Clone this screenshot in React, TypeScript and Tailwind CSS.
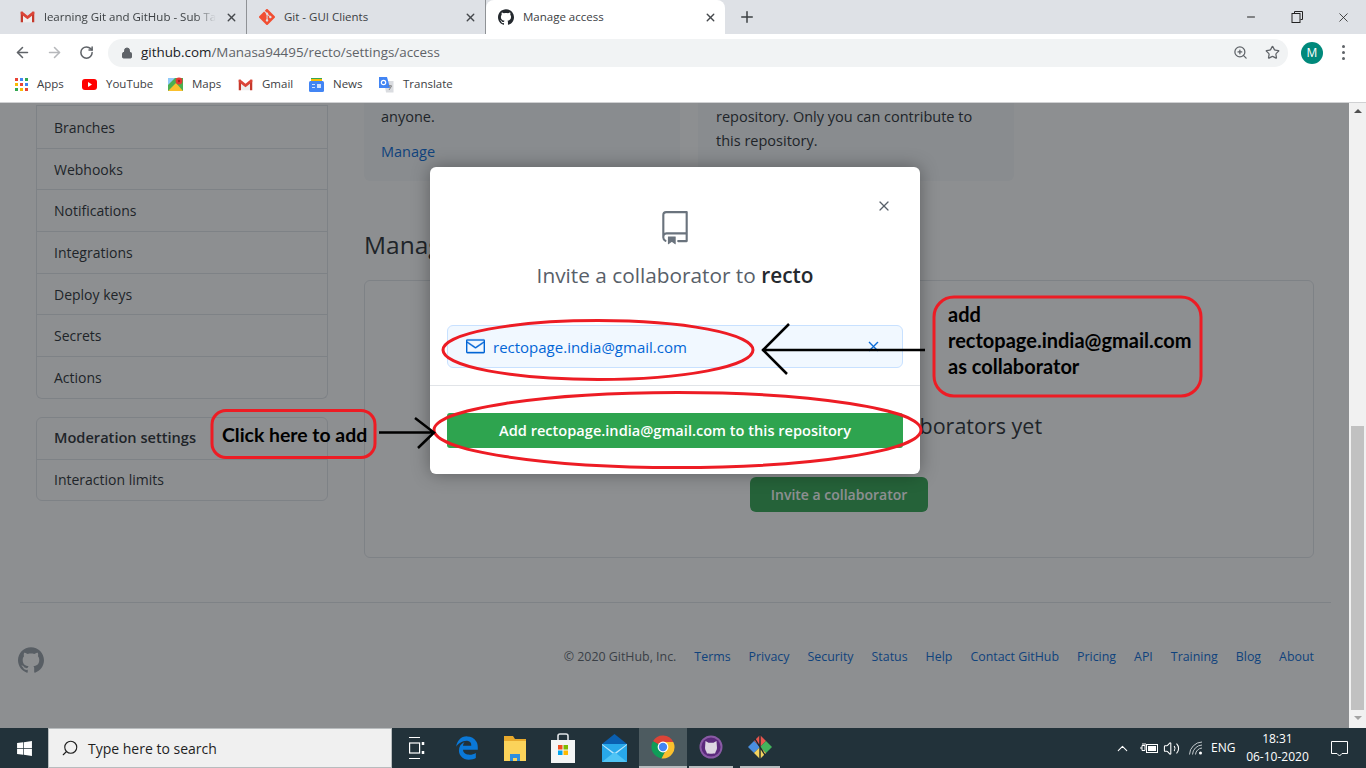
import type { ReactNode } from "react";
import { ArrowLeft, ArrowRight, RotateCw, Lock, ZoomIn, Star, X, Plus, Minus, Search, ChevronUp, Volume2 } from "lucide-react";
import { GoRepo, GoMail, GoX } from "react-icons/go";
import { SiGit, SiGithub } from "react-icons/si";
import { FaWindows, FaEdgeLegacy } from "react-icons/fa";

const sideLinks = ["Branches", "Webhooks", "Notifications", "Integrations", "Deploy keys", "Secrets", "Actions"];
const footerLinks = ["Terms", "Privacy", "Security", "Status", "Help", "Contact GitHub", "Pricing", "API", "Training", "Blog", "About"];

function GmailIcon({ size = 15 }: { size?: number }) {
  return (
    <svg width={size} height={size * 0.8} viewBox="0 0 20 16" className="shrink-0">
      <path d="M4 6.500h12V15H4z" fill="#eeeeee" />
      <path d="M1 1h3v14H1z M16 1h3v14h-3z" fill="#c5382b" />
      <path d="M1 1h2.400L10 6.400 16.600 1H19v3l-9 7-9-7z" fill="#db4437" />
    </svg>
  );
}

function YouTubeIcon() {
  return (
    <svg width="15" height="11" viewBox="0 0 15 11" className="shrink-0">
      <rect width="15" height="11" rx="3" fill="#f00" />
      <path d="M6 3l4 2.500L6 8z" fill="#fff" />
    </svg>
  );
}

function AppsIcon() {
  const colors = ["#ea4335", "#4285f4", "#34a853", "#fbbc04", "#ea4335", "#4285f4", "#34a853", "#fbbc04", "#ea4335"];
  return (
    <div className="grid grid-cols-3 gap-[2px] w-[13px] shrink-0">
      {colors.map((c, i) => (
        <span key={i} className="w-[3px] h-[3px]" style={{ background: c }} />
      ))}
    </div>
  );
}

function MapsIcon() {
  return (
    <svg width="15" height="15" viewBox="0 0 15 15" className="shrink-0">
      <path d="M0 1h15v13H0z" fill="#4caf50" />
      <path d="M0 14L8 6l7 8z" fill="#fbc02d" />
      <path d="M0 1h7L0 8z" fill="#90caf9" />
      <circle cx="11" cy="4" r="3.400" fill="#e53935" />
      <circle cx="11" cy="4" r="1.200" fill="#a32020" />
    </svg>
  );
}

function NewsIcon() {
  return (
    <svg width="15" height="14" viewBox="0 0 15 14" className="shrink-0">
      <path d="M2 0h11v4H2z" fill="#34a853" />
      <path d="M2 1h11v2H2z" fill="#fbbc04" />
      <rect y="3" width="15" height="11" rx="1.500" fill="#4285f4" />
      <path d="M3 6h3v1H3z M3 9h3v1H3z M8 6h4v4H8z" fill="#cfe0fc" />
    </svg>
  );
}

function TranslateIcon() {
  return (
    <svg width="16" height="16" viewBox="0 0 16 16" className="shrink-0">
      <path d="M6 4h9.500v11.500H8z" fill="#dadce0" />
      <path d="M1 0h8l3 11H1z" fill="#4285f4" />
      <circle cx="5.500" cy="5.500" r="2.200" fill="none" stroke="#fff" strokeWidth="1.200" />
      <path d="M10 9h4M12 8v1M11 13l2.400-3.600" stroke="#777" strokeWidth="0.900" fill="none" />
    </svg>
  );
}

function ChromeIcon() {
  return (
    <svg width="24" height="24" viewBox="0 0 24 24">
      <path d="M12 12L2 6.200A11.500 11.500 0 0 1 22.300 7H12z" fill="#db4437" />
      <path d="M12 12L2 6.200A11.500 11.500 0 0 0 10.500 23.400L16 13z" fill="#0f9d58" />
      <path d="M12 7h10.300A11.500 11.500 0 0 1 10.500 23.400L16 13z" fill="#fbc02d" />
      <circle cx="12" cy="12" r="5.400" fill="#fff" />
      <circle cx="12" cy="12" r="4.200" fill="#4285f4" />
    </svg>
  );
}

function FolderIcon() {
  return (
    <svg width="22" height="26" viewBox="0 0 22 26">
      <path d="M0 1h9l2 3h11v5H0z" fill="#e8a92c" />
      <path d="M0 6h22v20H0z" fill="#fbd35a" />
      <path d="M6 26v-7h10v7h-3v-3H9v3z" fill="#2f8fdc" />
    </svg>
  );
}

function StoreIcon() {
  return (
    <svg width="24" height="30" viewBox="0 0 24 30">
      <path d="M7 8V3a2 2 0 0 1 2-2h6a2 2 0 0 1 2 2v5" fill="none" stroke="#dfe3e6" strokeWidth="1.600" />
      <path d="M0 7h24v23H0z" fill="#f4f5f5" />
      <path d="M7 12h4.500v4.500H7z" fill="#f25022" />
      <path d="M12.500 12H17v4.500h-4.500z" fill="#7fba00" />
      <path d="M7 17.500h4.500V22H7z" fill="#00a4ef" />
      <path d="M12.500 17.500H17V22h-4.500z" fill="#ffb900" />
    </svg>
  );
}

function MailIcon() {
  return (
    <svg width="25" height="28" viewBox="0 0 25 28">
      <path d="M0 10L12.500 0 25 10z" fill="#0a5fb0" />
      <path d="M0 10h25v18H0z" fill="#28a8ea" />
      <path d="M0 10l12.500 9L25 10v1L12.500 21 0 11z" fill="#b9e4fb" />
      <path d="M0 28l12.500-10L25 28z" fill="#50c4f5" />
    </svg>
  );
}

function KrakenIcon() {
  return (
    <svg width="24" height="24" viewBox="0 0 24 24">
      <circle cx="12" cy="12" r="11.500" fill="#8a5aa6" />
      <circle cx="12" cy="12" r="9.600" fill="#5b2a7c" />
      <path d="M6.500 6l3 1.800h5L17.500 6l.5 7a6 6 0 0 1-12 0z M7 16a6 6 0 0 0 10 0l-1 2.500H8z" fill="#ddd6e2" />
    </svg>
  );
}

function GitGuiIcon() {
  return (
    <svg width="24" height="28" viewBox="0 0 24 28">
      <path d="M12 2l6 6-6 6-6-6z" fill="#e8554e" />
      <path d="M18 8l6 6-6 6-6-6z" fill="#43b35c" />
      <path d="M6 8l6 6-6 6-6-6z" fill="#4a8fe0" />
      <path d="M12 14l6 6-6 6-6-6z" fill="#f4d35e" />
      <path d="M12 1v26M7 6l10 16" stroke="#1c2a30" strokeWidth="1.400" />
    </svg>
  );
}

function TaskViewIcon() {
  return (
    <svg width="16" height="24" viewBox="0 0 16 24" fill="none" stroke="#fff" strokeWidth="1.200">
      <path d="M0 1.500h11 M0 22.500h11" />
      <rect x="0.600" y="7" width="10" height="10" />
      <path d="M14 6v3 M14 15v3" strokeWidth="2.500" />
    </svg>
  );
}

function BatteryIcon() {
  return (
    <svg width="19" height="12" viewBox="0 0 19 12" fill="none" stroke="#fff" className="shrink-0">
      <path d="M0 6h2 M2 3.500h3v5H2z M3 3.500V1 M5 1v2.500" strokeWidth="1" />
      <rect x="6.500" y="2.500" width="11" height="8" strokeWidth="1" />
      <rect x="8" y="4" width="8" height="5" fill="#fff" stroke="none" />
    </svg>
  );
}

function WifiIcon() {
  return (
    <svg width="14" height="14" viewBox="0 0 14 14" fill="none" stroke="#c4cacd" strokeWidth="1" className="shrink-0">
      <path d="M.5 13.500A13 13 0 0 1 13 1" />
      <path d="M3.500 13.500A10 10 0 0 1 13 4" />
      <path d="M6.500 13.500A7 7 0 0 1 13 7" />
      <circle cx="11.500" cy="12" r="1.500" fill="#fff" stroke="none" />
    </svg>
  );
}

function NotifyIcon() {
  return (
    <svg width="17" height="17" viewBox="0 0 17 17" fill="none" stroke="#fff" strokeWidth="1" className="shrink-0">
      <path d="M.5 1.500h16v12h-5.500l-2.500 2.500-2.500-2.500H.5z" />
    </svg>
  );
}

function BrowserTab({ icon, title, active, fade }: { icon: ReactNode; title: string; active?: boolean; fade?: boolean }) {
  return (
    <div className={`w-[239px] h-[34px] shrink-0 flex items-center pl-[12px] pr-[8px] gap-[9px] text-[11.500px] text-[#3c4043] ${active ? "bg-white rounded-t-[8px]" : "border-r border-[#8f9296]"}`}>
      {icon}
      <span className={`flex-1 whitespace-nowrap overflow-hidden ${fade ? "[mask-image:linear-gradient(to_right,black_88%,transparent)]" : ""}`}>{title}</span>
      <X size={13} strokeWidth={2.500} className="shrink-0 text-[#45484c]" />
    </div>
  );
}

function Bookmark({ icon, label, className }: { icon: ReactNode; label: string; className: string }) {
  return (
    <div className={`flex items-center gap-[9px] text-[11.500px] text-[#3c4043] ${className}`}>
      {icon}
      <span className="-mt-[1px]">{label}</span>
    </div>
  );
}

export default function App() {
  return (
    <div className="relative w-[1366px] h-[768px] overflow-hidden flex flex-col bg-white font-['Open_Sans',sans-serif] text-[#24292e]">
      {/* chrome: tabs */}
      <div className="h-[34px] bg-[#dee1e6] flex items-end pl-[8px] shrink-0">
        <BrowserTab icon={<GmailIcon />} title="learning Git and GitHub - Sub Tasks" fade />
        <BrowserTab icon={<SiGit size={16} color="#f14e32" />} title="Git - GUI Clients" />
        <BrowserTab icon={<SiGithub size={16} color="#24292e" />} title="Manage access" active />
        <Plus size={18} strokeWidth={2} className="ml-[13px] mb-[8px] text-[#3c4043]" />
        <div className="ml-auto flex items-center h-full text-[#222]">
          <Minus size={12} className="mr-[34px]" />
          <svg width="12" height="12" viewBox="0 0 12 12" fill="none" stroke="#222" className="mr-[33px]">
            <path d="M3.500 2.500V.5h8v8H9.500" />
            <rect x="1" y="2.500" width="8" height="9" />
          </svg>
          <X size={15} strokeWidth={1.300} className="mr-[15px]" />
        </div>
      </div>

      {/* chrome: toolbar */}
      <div className="h-[37px] flex items-center shrink-0 pl-[14px]">
        <ArrowLeft size={17} className="text-[#5f6368]" strokeWidth={2.200} />
        <ArrowRight size={17} className="ml-[15px] text-[#b6b8bb]" strokeWidth={2.200} />
        <RotateCw size={15} className="ml-[16px] text-[#5f6368]" strokeWidth={2.400} />
        <div className="ml-[14px] w-[1180px] h-[28px] rounded-full bg-[#f1f3f4] flex items-center pl-[13px] pr-[8px]">
          <Lock size={12} fill="#5f6368" className="text-[#5f6368]" />
          <span className="ml-[8px] text-[13.400px] text-[#5f6368]">
            <span className="text-[#202124]">github.com</span>/Manasa94495/recto/settings/access
          </span>
          <ZoomIn size={15} className="ml-auto text-[#5f6368]" />
          <Star size={15} className="ml-[17px] text-[#5f6368]" />
        </div>
        <div className="ml-[13px] w-[22px] h-[22px] rounded-full bg-[#00897b] text-white text-[12px] flex items-center justify-center">M</div>
        <div className="ml-[19px] flex flex-col gap-[3px]">
          <span className="w-[3px] h-[3px] rounded-full bg-[#5f6368]" />
          <span className="w-[3px] h-[3px] rounded-full bg-[#5f6368]" />
          <span className="w-[3px] h-[3px] rounded-full bg-[#5f6368]" />
        </div>
      </div>

      {/* chrome: bookmarks */}
      <div className="h-[32px] flex items-center shrink-0 pl-[15px] pb-[4px] border-b border-[#d0d1d3]">
        <Bookmark icon={<AppsIcon />} label="Apps" className="w-[67px]" />
        <Bookmark icon={<YouTubeIcon />} label="YouTube" className="w-[86px]" />
        <Bookmark icon={<MapsIcon />} label="Maps" className="w-[70px]" />
        <Bookmark icon={<GmailIcon />} label="Gmail" className="w-[71px]" />
        <Bookmark icon={<NewsIcon />} label="News" className="w-[69px]" />
        <Bookmark icon={<TranslateIcon />} label="Translate" className="w-[90px]" />
      </div>

      {/* page */}
      <div className="flex-1 flex min-h-0">
        <div className="relative flex-1 overflow-hidden flex flex-col">
          <div className="flex pl-[36px]">
            <div className="w-[292px] shrink-0 text-[14px] pt-[2px]">
              <div className="border border-t-0 border-[#e1e4e8] rounded-b-[6px]">
                <div className="border-t border-[#e1e4e8]" />
                {sideLinks.map((s, i) => (
                  <div key={s} className={`h-[41.700px] flex items-center pl-[17px] ${i ? "border-t border-[#e1e4e8]" : "pt-[2px]"}`}>{s}</div>
                ))}
              </div>
              <div className="mt-[18px] border border-[#e1e4e8] rounded-[6px]">
                <div className="h-[41px] flex items-center pl-[17px] text-[14.600px] font-semibold">Moderation settings</div>
                <div className="h-[41px] flex items-center pl-[17px] border-t border-[#e1e4e8]">Interaction limits</div>
              </div>
            </div>
            <div className="ml-[36px] w-[950px]">
              <div className="flex gap-[18px] text-[14.500px] leading-[24px]">
                <div className="w-[316px] h-[78px] bg-[#f6f8fa] rounded-b-[6px] pl-[17px] pt-[2px]">
                  <div>anyone.</div>
                  <div className="mt-[11px] text-[#0366d6]">Manage</div>
                </div>
                <div className="w-[316px] h-[78px] bg-[#f6f8fa] rounded-b-[6px] pl-[18px] pt-[2px]">
                  <div>repository. Only you can contribute to</div>
                  <div>this repository.</div>
                </div>
              </div>
              <h2 className="mt-[48px] text-[24.500px] leading-[32px]">Manage access</h2>
              <div className="mt-[19px] h-[278px] border border-[#e1e4e8] rounded-[6px] flex flex-col items-center pt-[128px]">
                <div className="text-[21.500px] leading-[34px] font-medium whitespace-nowrap">You haven't invited any collaborators yet</div>
                <div className="mt-[34px] w-[178px] h-[35px] bg-[#2ea44f] rounded-[6px] text-white text-[14px] font-semibold flex items-center justify-center">Invite a collaborator</div>
              </div>
            </div>
          </div>

          <div className="mt-[44px] mx-[20px] w-[1311px] border-t border-[#e1e4e8] flex items-center pt-[44px]">
            <SiGithub size={26} className="text-[#959da5] -ml-[2px]" />
            <div className="ml-auto mr-[17px] flex items-center gap-[18px] text-[12.400px] -mt-[5px] text-[#0366d6]">
              <span className="text-[#586069]">© 2020 GitHub, Inc.</span>
              {footerLinks.map((l) => (
                <span key={l}>{l}</span>
              ))}
            </div>
          </div>

          {/* dim overlay + dialog */}
          <div className="absolute inset-0 bg-[rgba(27,31,35,0.5)]" />
          <div className="absolute left-[430px] top-[64px] w-[490px] h-[307px] bg-white rounded-[6px] shadow-[0_0_18px_rgba(0,0,0,0.35)] flex flex-col">
            <X size={16} strokeWidth={1.800} className="absolute right-[28px] top-[31px] text-[#586069]" />
            <div className="flex flex-col items-center pt-[44px]">
              <GoRepo size={34} className="text-[#6a737d]" />
              <div className="mt-[15px] text-[20.800px] leading-[30px] text-[#586069]">
                Invite a collaborator to <span className="font-semibold text-[#24292e]">recto</span>
              </div>
            </div>
            <div className="mt-[35px] mx-[17px] h-[43px] bg-[#f1f8ff] border border-[#c8e1ff] rounded-[6px] flex items-center pl-[18px] pr-[20px] text-[#0366d6]">
              <GoMail size={19} stroke="currentColor" strokeWidth={0.500} />
              <span className="ml-[8px] mt-[1px] text-[15px] font-medium">rectopage.india@gmail.com</span>
              <GoX size={17} stroke="currentColor" strokeWidth={0.500} className="ml-auto" />
            </div>
            <div className="mt-[17px] border-t border-[#e1e4e8]" />
            <div className="mt-[27px] mx-[17px] h-[35px] bg-[#2ea44f] rounded-[3px] text-white text-[14.600px] font-semibold flex items-center justify-center">
              Add rectopage.india@gmail.com to this repository
            </div>
          </div>
        </div>

        {/* scrollbar */}
        <div className="w-[17px] shrink-0 bg-[#f1f1f1] flex flex-col items-center relative">
          <span className="mt-[6px] border-x-[4px] border-x-transparent border-b-[4px] border-b-[#505050]" />
          <div className="mt-[313px] w-[13px] h-[284px] bg-[#c1c1c1]" />
          <span className="mt-[6px] border-x-[4px] border-x-transparent border-t-[4px] border-t-[#a3a3a3]" />
        </div>
      </div>

      {/* taskbar */}
      <div className="h-[40px] shrink-0 bg-[#22323a] flex items-center text-white">
        <div className="w-[48px] flex justify-center"><FaWindows size={17} /></div>
        <div className="w-[344px] h-full bg-[#f0f0f0] border border-[#b8bcbe] flex items-center pl-[12px] text-[14px] text-[#1f1f1f]">
          <Search size={18} strokeWidth={1.500} className="-scale-x-100" />
          <span className="ml-[9px]">Type here to search</span>
        </div>
        <div className="ml-[16px] w-[17px] flex justify-center"><TaskViewIcon /></div>
        <div className="ml-[30px] w-[24px] flex justify-center"><FaEdgeLegacy size={24} color="#0a78d7" /></div>
        <div className="ml-[24px] w-[24px] flex justify-center"><FolderIcon /></div>
        <div className="ml-[24px] w-[24px] flex justify-center"><StoreIcon /></div>
        <div className="ml-[27px] w-[25px] flex justify-center"><MailIcon /></div>
        <div className="ml-[12px] w-[48px] h-full bg-[#4d5b60] border-b-[2px] border-[#b6bcbe] flex items-center justify-center"><ChromeIcon /></div>
        <div className="ml-[2px] w-[44px] h-full border-b-[2px] border-[#b6bcbe] flex items-center justify-center"><KrakenIcon /></div>
        <div className="ml-[7px] w-[40px] h-full border-b-[2px] border-[#b6bcbe] flex items-center justify-center"><GitGuiIcon /></div>

        <ChevronUp size={17} strokeWidth={1.500} className="ml-[334px]" />
        <div className="ml-[9px]"><BatteryIcon /></div>
        <Volume2 size={17} strokeWidth={1.500} className="ml-[4px]" />
        <div className="ml-[9px]"><WifiIcon /></div>
        <span className="ml-[8px] text-[12px]">ENG</span>
        <div className="ml-[8px] w-[68px] flex flex-col items-center text-[12px] leading-[18px]">
          <span>18:31</span>
          <span>06-10-2020</span>
        </div>
        <div className="ml-[20px]"><NotifyIcon /></div>
      </div>

      {/* hand-drawn annotations on top of the screenshot */}
      <svg className="absolute inset-0 pointer-events-none" width="1366" height="768" fill="none">
        <g stroke="#ed1c24" strokeWidth="3">
          <ellipse cx="598" cy="350" rx="155" ry="29.500" />
          <ellipse cx="677.500" cy="430" rx="243.500" ry="37.500" />
          <rect x="212" y="410.500" width="163" height="47" rx="14" />
          <rect x="934" y="297" width="267" height="99" rx="20" />
        </g>
        <g stroke="#000" strokeWidth="2.500">
          <path d="M379 432.500H433 M415 418L434 432.500L418 448" />
          <path d="M925 350H762 M789 324L763 350L787 374" />
        </g>
      </svg>
      <div className="absolute left-[222px] top-[422px] font-['Lato',sans-serif] font-bold text-[19.400px] leading-[26px] text-black whitespace-nowrap">Click here to add</div>
      <div className="absolute left-[948px] top-[301px] font-['Lato',sans-serif] font-bold text-[20px] leading-[26px] text-black whitespace-nowrap">
        add<br />rectopage.india@gmail.com<br />as collaborator
      </div>
    </div>
  );
}
